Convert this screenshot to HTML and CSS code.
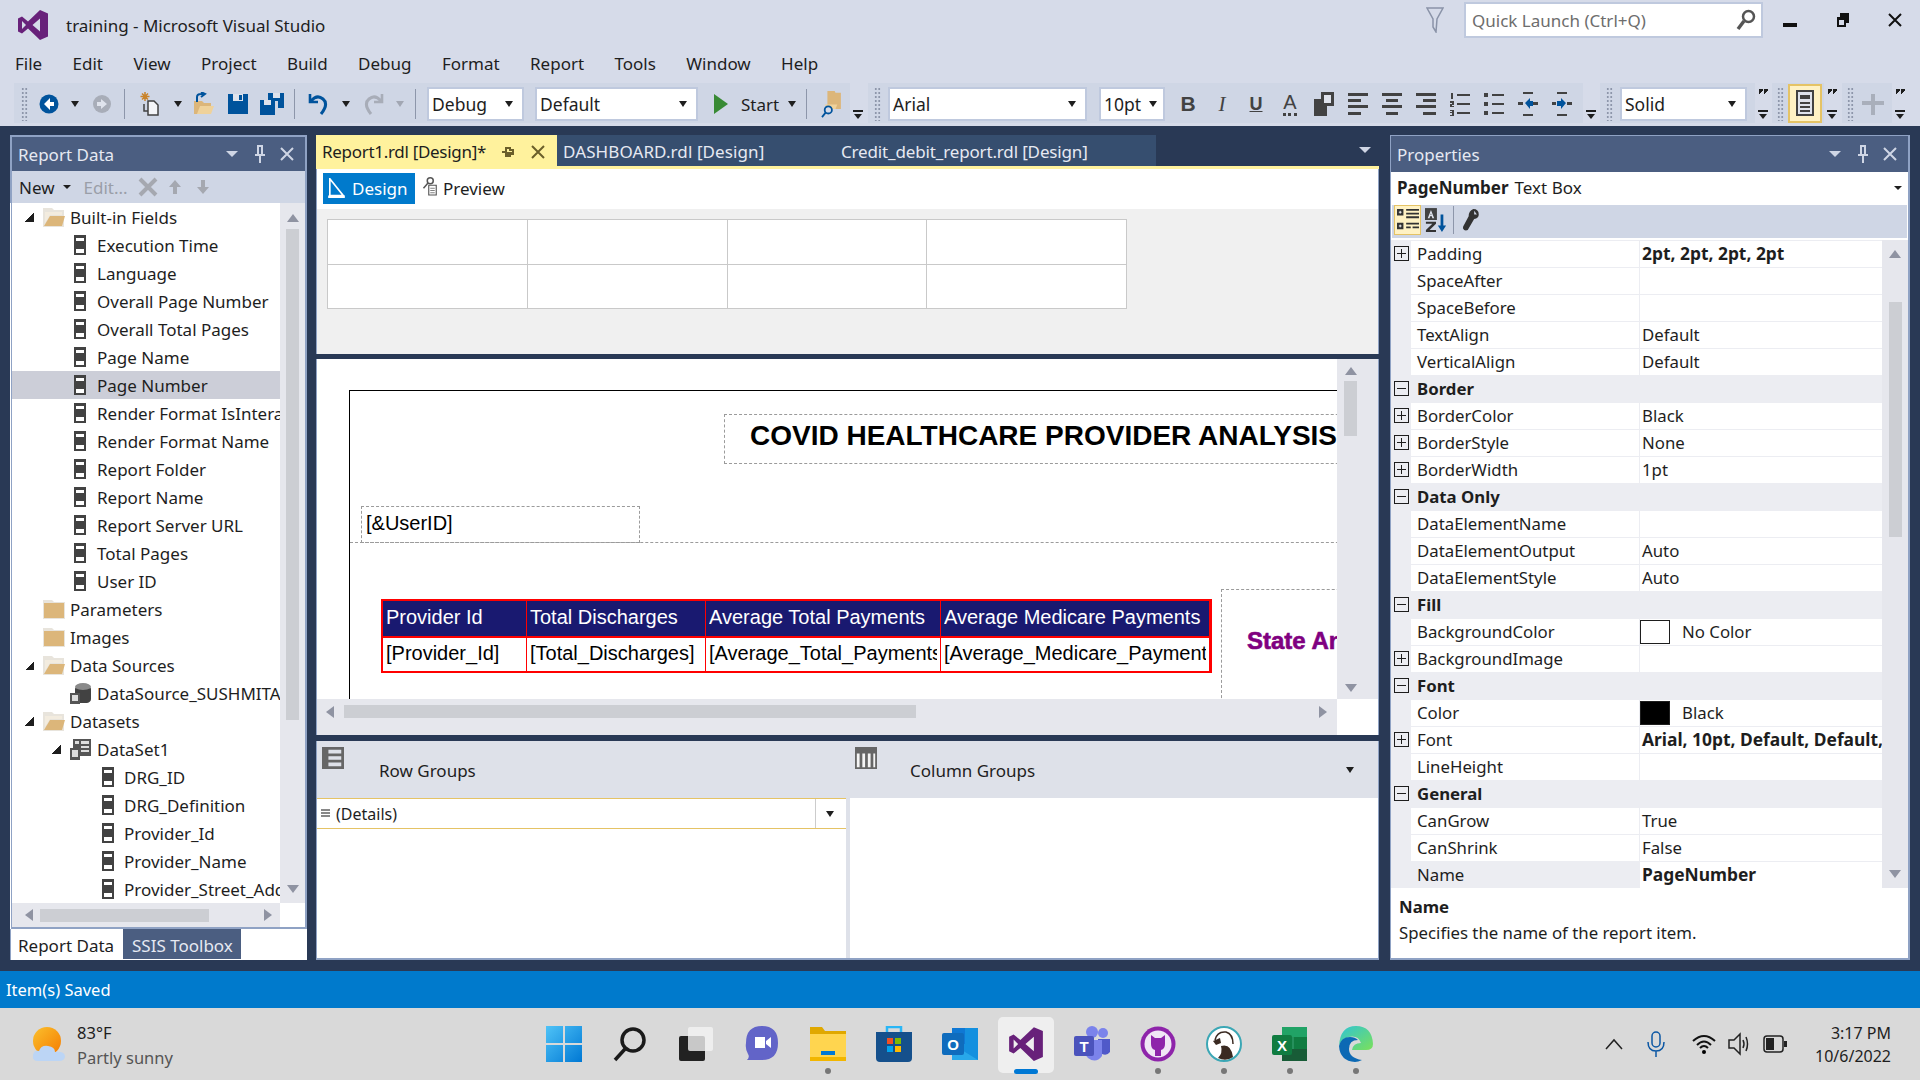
FILE: index.html
```html
<!DOCTYPE html>
<html>
<head>
    <title>training - Microsoft Visual Studio</title>
    <link rel="stylesheet" href="styles.css">
</head>
<body>
    <svg class="defs" width="0" height="0">
        <symbol id="vs" viewBox="0 0 32 32"><path fill-rule="evenodd" d="M23 1 31 4.500V27.500L23 31 11 19.500 5 24.500 1 22.500V9.500L5 7.500 11 12.500ZM23 9.500 15.500 16 23 22.500ZM5 12V20L9 16Z"/></symbol>
        <symbol id="field" viewBox="0 0 12 20"><rect width="12" height="20" fill="#424242"/><rect x="2" y="3" width="8" height="3" fill="#fff"/><rect x="2" y="14" width="8" height="4" fill="#fff"/></symbol>
        <symbol id="folder" viewBox="0 0 22 20"><path d="M0 1H9L11 3H22V20H0Z" fill="#e8e4dc"/><path d="M1 4H21V19H1Z" fill="#dcb67a"/></symbol>
        <symbol id="folder-open" viewBox="0 0 22 20"><path d="M0 1H9L11 3H21V20H0Z" fill="#e8e4dc"/><path d="M2 5H19V8H7L2 16Z" fill="#f3ecdf"/><path d="M7 9H22L19 19H1Z" fill="#dcb67a"/></symbol>
        <symbol id="db" viewBox="0 0 21 21"><ellipse cx="13" cy="4" rx="8" ry="4" fill="#8a8a8a"/><path d="M5 5V20H17Q21 19 21 16V5Q13 9 5 5Z" fill="#424242"/><rect x="0" y="10" width="10" height="11" fill="#555"/><rect x="2" y="12" width="6" height="6" fill="#ddd"/></symbol>
        <symbol id="dataset" viewBox="0 0 21 21"><rect x="3" y="0" width="18" height="17" fill="#555"/><path d="M5 2H9V5H5ZM11 2H19V5H11ZM11 7H19V9H11ZM11 11H19V13H11Z" fill="#ddd"/><rect x="0" y="9" width="10" height="12" fill="#555"/><rect x="2" y="11" width="6" height="7" fill="#ddd"/></symbol>
        <symbol id="back" viewBox="0 0 20 20"><circle cx="10" cy="10" r="9.500"/><path d="M11 4 5 10 11 16V12H15V8H11Z" fill="#fff"/></symbol>
        <symbol id="forward" viewBox="0 0 20 20"><circle cx="10" cy="10" r="9" fill="#a8adb8"/><path d="M9 5 15 10 9 15V12H5V8H9Z" fill="#dfe3ec"/></symbol>
        <symbol id="new" viewBox="0 0 20 24"><path d="M5 0V9M0.500 4.500H9.500M2 1.500 8 7.500M8 1.500 2 7.500" fill="none" stroke="#c9832a" stroke-width="1.500"/><path d="M8 9H14L18 13V23H8Z" fill="#f4f5f8" stroke="#424242" stroke-width="1.500"/><path d="M4 12V19H8" fill="none" stroke="#424242" stroke-width="1.500"/></symbol>
        <symbol id="open" viewBox="0 0 22 24"><path d="M1 9H9L11 11H18V22H1Z" fill="#dcb67a"/><path d="M4 22 7 14H21L18 22Z" fill="#efd29b"/><path d="M4 10V5Q4 2 8 2H11M8 0 12 2 8 5" fill="none" stroke="#00539c" stroke-width="2"/></symbol>
        <symbol id="save" viewBox="0 0 20 20"><path d="M0 0H20V20H0Z" fill="#00539c"/><path d="M5 0H15V7H5Z" fill="#dfe3ec"/><path d="M11 1H14V6H11Z" fill="#00539c"/></symbol>
        <symbol id="saveall" viewBox="0 0 24 22"><path d="M8 0H24V15H18V8H8Z" fill="#00539c"/><path d="M13 0H20V5H13Z" fill="#dfe3ec"/><path d="M0 7H15V22H0Z" fill="#00539c"/><path d="M4 7H11V12H4Z" fill="#dfe3ec"/></symbol>
        <symbol id="undo" viewBox="0 0 22 24"><path d="M3 3V11H11" fill="none" stroke="currentColor" stroke-width="2.600" transform="translate(0 -1)"/><path d="M4 9Q10 2 16 7T14 22" fill="none" stroke="currentColor" stroke-width="3"/></symbol>
        <symbol id="find" viewBox="0 0 22 30"><path d="M7 0H15L16 2H22V20H7Z" fill="#dcb67a"/><path d="M4 15H18L16 20H7Z" fill="#efd29b"/><circle cx="8" cy="21" r="4" fill="#d6dbe9" stroke="#00539c" stroke-width="2"/><path d="M5 24 1 29" stroke="#00539c" stroke-width="2"/></symbol>
        <symbol id="fillbox" viewBox="0 0 20 24"><rect y="7" width="13" height="17" fill="#424242"/><rect x="7" y="0" width="13" height="14" fill="#424242"/><rect x="10" y="3" width="7" height="8" fill="#dfe3ec"/></symbol>
        <symbol id="al-left" viewBox="0 0 20 24"><path d="M0 1H20V4H0ZM0 7H13V10H0ZM0 13H20V16H0ZM0 20H13V23H0Z"/></symbol>
        <symbol id="al-center" viewBox="0 0 20 24"><path d="M0 1H20V4H0ZM4 7H16V10H4ZM0 13H20V16H0ZM4 20H16V23H4Z"/></symbol>
        <symbol id="al-right" viewBox="0 0 20 24"><path d="M0 1H20V4H0ZM7 7H20V10H7ZM0 13H20V16H0ZM7 20H20V23H7Z"/></symbol>
        <symbol id="ol" viewBox="0 0 20 24"><path d="M7 2H20V4H7ZM7 11H20V13H7ZM7 20H20V22H7ZM1 1H3V7H1ZM0 9H4V13H2V14H4V15H0V12H2V11H0ZM0 18H4V24H0V23H2V21H0V20H2V19H0Z"/></symbol>
        <symbol id="ul" viewBox="0 0 20 24"><path d="M0 1H4V5H0ZM8 2H20V4H8ZM0 10H4V14H0ZM8 11H20V13H8ZM0 19H4V23H0ZM8 20H20V22H8Z"/></symbol>
        <symbol id="outdent" viewBox="0 0 20 24"><path d="M5 0H15V2H5ZM0 10H5V13H0ZM15 10H20V13H15ZM5 22H15V24H5Z" fill="#424242"/><path d="M7 11 12 6V9H15V14H12V17Z" fill="#00539c"/></symbol>
        <symbol id="indent" viewBox="0 0 20 24"><path d="M5 0H15V2H5ZM0 10H4V13H0ZM15 10H20V13H15ZM5 22H15V24H5Z" fill="#424242"/><path d="M14 11 9 6V9H5V14H9V17Z" fill="#00539c"/></symbol>
        <symbol id="page" viewBox="0 0 18 26"><rect x="1" y="1" width="16" height="24" fill="#dfe3ec" stroke="#424242" stroke-width="2"/><path d="M4 5H14V9H4ZM4 12H14V14H4ZM4 16H14V18H4ZM4 20H14V22H4Z" fill="#424242"/></symbol>
        <symbol id="cat" viewBox="0 0 24 26"><path d="M0 1H7V8H0ZM0 16H7V23H0Z" fill="#333"/><path d="M2 4.500H5M3.500 3V6M2 19.500H5M3.500 18V21" stroke="#fff"/><path d="M10 1H24V3H10ZM10 5H24V7H10ZM10 9H24V11H10ZM10 16H24V18H10ZM10 20H15V22H10ZM17 20H24V22H17Z" fill="#333"/></symbol>
        <symbol id="az" viewBox="0 0 24 26"><rect x="0" y="0" width="13" height="13" fill="#424242"/><path d="M6.500 2 10 11H8L7.500 9H5.500L5 11H3ZM6 7.500H7L6.500 5.500Z" fill="#dfe3ec" fill-rule="evenodd"/><path d="M1 15H12V17L5 24H12V26H1V24L8 17H1Z" fill="#333"/><path d="M17 7H20V19H23L18.500 26 14 19H17Z" fill="#00539c"/></symbol>
        <symbol id="wrench" viewBox="0 0 20 24"><path d="M13 0Q19 0 19 6 19 10 14 11L7 23Q5 24 3 23 1 21 2 19L8 8Q8 2 13 0ZM14 2V6L17 6" fill="#333"/></symbol>
        <symbol id="rows" viewBox="0 0 24 24"><path d="M0 0H24V24H0Z" fill="#666"/><path d="M7 3H21V7H7ZM7 10H21V14H7ZM7 17H21V21H7Z" fill="#dee1e9"/></symbol>
        <symbol id="cols" viewBox="0 0 24 24"><path d="M0 0H24V24H0Z" fill="#666"/><path d="M2 7H5V22H2ZM8 7H11V22H8ZM14 7H17V22H14ZM20 7H22V22H20Z" fill="#f5f5f5"/></symbol>
        <symbol id="design" viewBox="0 0 20 24"><path d="M2 1 18 21H2Z" fill="none" stroke="#fff" stroke-width="2"/><path d="M0 21H20V24H0Z" fill="#fff"/></symbol>
        <symbol id="preview" viewBox="0 0 20 24"><circle cx="11" cy="5" r="4" fill="none" stroke="#555" stroke-width="2"/><path d="M8 8 2 15" stroke="#555" stroke-width="2"/><path d="M9 11H19V24H9Z" fill="#fff" stroke="#555" stroke-width="1.500"/><path d="M11 15H17M11 18H17M11 21H17" stroke="#555"/></symbol>
        <symbol id="pin" viewBox="0 0 12 18"><path d="M3 0H9V9H11V11H7V18H5V11H1V9H3ZM5 2V9H7V2Z" fill-rule="evenodd"/></symbol>
        <symbol id="close" viewBox="0 0 14 14"><path d="M1 1 13 13M13 1 1 13" fill="none" stroke="currentColor" stroke-width="2"/></symbol>
    </svg>

    <header class="titlebar">
        <svg class="vs-logo"><use href="#vs"/></svg>
        <span class="app-title">training - Microsoft Visual Studio</span>
        <svg class="feedback" viewBox="0 0 18 26"><path d="M1 1H17L11 12 10 25 7 20V12Z" fill="none" stroke="#8a93a8" stroke-width="1.500"/></svg>
        <div class="quick-launch">
            <span>Quick Launch (Ctrl+Q)</span>
            <svg class="ql-search" viewBox="0 0 20 22"><circle cx="12.500" cy="7.500" r="5.500" fill="#fff" stroke="#555" stroke-width="2.500"/><path d="M8 12 2 20" stroke="#555" stroke-width="3.500"/></svg>
        </div>
        <div class="win-btn"><span class="win-min"></span></div>
        <div class="win-btn"><svg class="win-restore" viewBox="0 0 14 16"><path d="M4 1H13V11H10V5H4ZM1 5H10V15H1ZM3 8V13H8V8Z" fill="#111" fill-rule="evenodd"/></svg></div>
        <div class="win-btn"><svg class="win-close"><use href="#close"/></svg></div>
    </header>

    <nav class="menubar">
        <span>File</span><span>Edit</span><span>View</span><span>Project</span><span>Build</span><span>Debug</span><span>Format</span><span>Report</span><span>Tools</span><span>Window</span><span>Help</span>
    </nav>

    <div class="toolbars">
        <div class="tb seg-std">
            <div class="slot w20"><i class="grip"></i></div>
            <div class="slot w30"><svg class="ic-20 blue"><use href="#back"/></svg></div>
            <div class="slot w22"><i class="arr"></i></div>
            <div class="slot w32"><svg class="ic-20"><use href="#forward"/></svg></div>
            <div class="slot w12"><i class="sep"></i></div>
            <div class="slot w40"><svg class="ic-24"><use href="#new"/></svg></div>
            <div class="slot w16"><i class="arr"></i></div>
            <div class="slot w36"><svg class="ic-24"><use href="#open"/></svg></div>
            <div class="slot w32"><svg class="ic-20"><use href="#save"/></svg></div>
            <div class="slot w36"><svg class="ic-24"><use href="#saveall"/></svg></div>
            <div class="slot w8"><i class="sep"></i></div>
            <div class="slot w40"><svg class="ic-24 undo"><use href="#undo"/></svg></div>
            <div class="slot w16"><i class="arr"></i></div>
            <div class="slot w40"><svg class="ic-24 redo"><use href="#undo"/></svg></div>
            <div class="slot w12"><i class="arr off"></i></div>
            <div class="slot w18"><i class="sep"></i></div>
            <div class="combo combo-debug"><span>Debug</span><i class="arr"></i></div>
            <div class="combo combo-default"><span>Default</span><i class="arr"></i></div>
            <div class="tb-start"><i class="play"></i><span>Start</span><i class="arr"></i></div>
            <div class="slot w12"><i class="sep"></i></div>
            <div class="slot w38"><svg class="ic-30"><use href="#find"/></svg></div>
        </div>
        <div class="overflow"><i class="over-mark"></i></div>
        <div class="tb seg-fmt">
            <div class="slot w18"><i class="grip"></i></div>
            <div class="combo combo-font"><span>Arial</span><i class="arr"></i></div>
            <div class="combo combo-size"><span>10pt</span><i class="arr"></i></div>
            <div class="slot fmt fmt-first"><b class="fmt-b">B</b></div>
            <div class="slot fmt"><i class="fmt-i">I</i></div>
            <div class="slot fmt"><u class="fmt-u">U</u></div>
            <div class="slot fmt"><span class="fmt-a">A</span></div>
            <div class="slot fmt"><svg class="ic-fmt"><use href="#fillbox"/></svg></div>
            <div class="slot fmt"><svg class="ic-fmt"><use href="#al-left"/></svg></div>
            <div class="slot fmt"><svg class="ic-fmt"><use href="#al-center"/></svg></div>
            <div class="slot fmt"><svg class="ic-fmt"><use href="#al-right"/></svg></div>
            <div class="slot fmt"><svg class="ic-fmt"><use href="#ol"/></svg></div>
            <div class="slot fmt"><svg class="ic-fmt"><use href="#ul"/></svg></div>
            <div class="slot fmt"><svg class="ic-fmt"><use href="#outdent"/></svg></div>
            <div class="slot fmt"><svg class="ic-fmt"><use href="#indent"/></svg></div>
        </div>
        <div class="overflow"><i class="over-mark"></i></div>
        <div class="tb seg-solid">
            <div class="slot w18"><i class="grip"></i></div>
            <div class="combo combo-solid"><span>Solid</span><i class="arr"></i></div>
        </div>
        <div class="overflow tall"><i class="over-top"></i><i class="over-mark"></i></div>
        <div class="tb seg-page">
            <div class="slot w16"><i class="grip"></i></div>
            <div class="page-btn"><svg class="ic-page"><use href="#page"/></svg></div>
        </div>
        <div class="overflow tall"><i class="over-top"></i><i class="over-mark"></i></div>
        <div class="tb seg-plus">
            <div class="slot w16"><i class="grip"></i></div>
            <div class="slot w30"><svg class="ic-24" viewBox="0 0 24 24"><path d="M10 2H14V9H23V13H14V23H10V13H1V9H10Z" fill="#a9afbb"/></svg></div>
        </div>
        <div class="overflow tall"><i class="over-top"></i><i class="over-mark"></i></div>
    </div>

    <main class="dock">
        <section class="panel panel-left">
            <div class="panel-title">
                <span>Report Data</span>
                <i class="arr light"></i>
                <svg class="pin"><use href="#pin"/></svg>
                <svg class="panel-close"><use href="#close"/></svg>
            </div>
            <div class="rd-toolbar">
                <span>New</span><i class="arr"></i>
                <span class="muted">Edit...</span>
                <svg class="rd-x" viewBox="0 0 20 20"><path d="M2 2 18 18M18 2 2 18" stroke="#a5a8b0" stroke-width="4"/></svg>
                <svg class="rd-arrow" viewBox="0 0 14 16"><path d="M7 1 13 8H9V15H5V8H1Z" fill="#a5a8b0"/></svg>
                <svg class="rd-arrow" viewBox="0 0 14 16"><path d="M5 1H9V8H13L7 15 1 8H5Z" fill="#a5a8b0"/></svg>
            </div>
            <div class="tree-wrap">
                <div class="tree">
                    <div class="row root"><i class="exp"></i><svg class="ic-folder"><use href="#folder-open"/></svg><span>Built-in Fields</span></div>
                    <div class="row field1"><svg class="ic-field"><use href="#field"/></svg><span>Execution Time</span></div>
                    <div class="row field1"><svg class="ic-field"><use href="#field"/></svg><span>Language</span></div>
                    <div class="row field1"><svg class="ic-field"><use href="#field"/></svg><span>Overall Page Number</span></div>
                    <div class="row field1"><svg class="ic-field"><use href="#field"/></svg><span>Overall Total Pages</span></div>
                    <div class="row field1"><svg class="ic-field"><use href="#field"/></svg><span>Page Name</span></div>
                    <div class="row field1 selected"><svg class="ic-field"><use href="#field"/></svg><span>Page Number</span></div>
                    <div class="row field1"><svg class="ic-field"><use href="#field"/></svg><span>Render Format IsInteractive</span></div>
                    <div class="row field1"><svg class="ic-field"><use href="#field"/></svg><span>Render Format Name</span></div>
                    <div class="row field1"><svg class="ic-field"><use href="#field"/></svg><span>Report Folder</span></div>
                    <div class="row field1"><svg class="ic-field"><use href="#field"/></svg><span>Report Name</span></div>
                    <div class="row field1"><svg class="ic-field"><use href="#field"/></svg><span>Report Server URL</span></div>
                    <div class="row field1"><svg class="ic-field"><use href="#field"/></svg><span>Total Pages</span></div>
                    <div class="row field1"><svg class="ic-field"><use href="#field"/></svg><span>User ID</span></div>
                    <div class="row root noexp"><svg class="ic-folder"><use href="#folder"/></svg><span>Parameters</span></div>
                    <div class="row root noexp"><svg class="ic-folder"><use href="#folder"/></svg><span>Images</span></div>
                    <div class="row root"><i class="exp"></i><svg class="ic-folder"><use href="#folder-open"/></svg><span>Data Sources</span></div>
                    <div class="row source"><svg class="ic-db"><use href="#db"/></svg><span>DataSource_SUSHMITA</span></div>
                    <div class="row root"><i class="exp"></i><svg class="ic-folder"><use href="#folder-open"/></svg><span>Datasets</span></div>
                    <div class="row dataset"><i class="exp"></i><svg class="ic-db"><use href="#dataset"/></svg><span>DataSet1</span></div>
                    <div class="row field2"><svg class="ic-field"><use href="#field"/></svg><span>DRG_ID</span></div>
                    <div class="row field2"><svg class="ic-field"><use href="#field"/></svg><span>DRG_Definition</span></div>
                    <div class="row field2"><svg class="ic-field"><use href="#field"/></svg><span>Provider_Id</span></div>
                    <div class="row field2"><svg class="ic-field"><use href="#field"/></svg><span>Provider_Name</span></div>
                    <div class="row field2"><svg class="ic-field"><use href="#field"/></svg><span>Provider_Street_Address</span></div>
                </div>
                <div class="vscroll vs-tree"><i class="sa up"></i><i class="thumb"></i><i class="sa down"></i></div>
                <div class="hscroll hs-tree"><i class="sa left"></i><i class="thumb"></i><i class="sa right"></i></div>
            </div>
            <div class="panel-tabs">
                <span class="ptab on">Report Data</span>
                <span class="ptab">SSIS Toolbox</span>
            </div>
        </section>

        <section class="center">
            <div class="doc-tabs">
                <div class="doc-tab active">
                    <span>Report1.rdl [Design]*</span>
                    <svg class="tab-pin" viewBox="0 0 14 12"><path d="M0 5H3V1H9V3H12V9H9V11H3V7H0ZM5 3V6H10V5H7V3Z" fill="#6b5f2a" fill-rule="evenodd"/></svg>
                    <svg class="tab-close"><use href="#close"/></svg>
                </div>
                <div class="doc-tab one"><span>DASHBOARD.rdl [Design]</span></div>
                <div class="doc-tab two"><span>Credit_debit_report.rdl [Design]</span></div>
                <i class="arr light well-arrow"></i>
            </div>
            <div class="doc-rule"></div>
            <div class="design-bar">
                <div class="view-btn on"><svg class="ic-view"><use href="#design"/></svg><span>Design</span></div>
                <div class="view-btn"><svg class="ic-view small"><use href="#preview"/></svg><span>Preview</span></div>
            </div>
            <div class="data-area">
                <div class="data-grid"><i></i><i></i><i></i><i></i><i></i><i></i><i></i><i></i></div>
            </div>
            <div class="splitter"></div>
            <div class="surface">
                <div class="canvas">
                    <div class="report">
                        <div class="item title-box"><span>COVID HEALTHCARE PROVIDER ANALYSIS</span></div>
                        <div class="item user-box">[&amp;UserID]</div>
                        <div class="head-line"></div>
                        <div class="tablix">
                            <div class="th"><span>Provider Id</span></div>
                            <div class="th"><span>Total Discharges</span></div>
                            <div class="th"><span>Average Total Payments</span></div>
                            <div class="th"><span>Average Medicare Payments</span></div>
                            <div class="td"><span>[Provider_Id]</span></div>
                            <div class="td"><span>[Total_Discharges]</span></div>
                            <div class="td"><span>[Average_Total_Payments]</span></div>
                            <div class="td"><span>[Average_Medicare_Payments]</span></div>
                        </div>
                        <div class="item chart-box"><span>State Analysis</span></div>
                    </div>
                </div>
                <div class="vscroll vs-canvas"><i class="sa up"></i><i class="thumb"></i><i class="sa down"></i></div>
                <div class="hscroll hs-canvas"><i class="sa left"></i><i class="thumb"></i><i class="sa right"></i></div>
            </div>
            <div class="splitter thin"></div>
            <div class="groups-head">
                <div class="group-title row-title"><svg class="ic-group"><use href="#rows"/></svg><span>Row Groups</span></div>
                <div class="group-title col-title"><svg class="ic-group"><use href="#cols"/></svg><span>Column Groups</span><i class="arr"></i></div>
            </div>
            <div class="groups-body">
                <div class="group-pane">
                    <div class="details">
                        <span class="det-ic"></span><span>(Details)</span>
                        <div class="det-drop"><i class="arr"></i></div>
                    </div>
                </div>
                <div class="group-pane second"></div>
            </div>
        </section>

        <section class="panel panel-right">
            <div class="panel-title">
                <span>Properties</span>
                <i class="arr light"></i>
                <svg class="pin"><use href="#pin"/></svg>
                <svg class="panel-close"><use href="#close"/></svg>
            </div>
            <div class="prop-select"><b>PageNumber</b> <span>Text Box</span><i class="arr"></i></div>
            <div class="prop-tools">
                <div class="pt-btn on"><svg class="ic-pt"><use href="#cat"/></svg></div>
                <div class="pt-btn"><svg class="ic-pt"><use href="#az"/></svg></div>
                <i class="pt-sep"></i>
                <div class="pt-btn"><svg class="ic-wrench"><use href="#wrench"/></svg></div>
            </div>
            <div class="prop-wrap">
                <div class="prop-grid">
                    <div class="prop"><i class="box plus"></i><span class="k">Padding</span><span class="v strong">2pt, 2pt, 2pt, 2pt</span></div>
                    <div class="prop"><span class="k">SpaceAfter</span><span class="v"></span></div>
                    <div class="prop"><span class="k">SpaceBefore</span><span class="v"></span></div>
                    <div class="prop"><span class="k">TextAlign</span><span class="v">Default</span></div>
                    <div class="prop"><span class="k">VerticalAlign</span><span class="v">Default</span></div>
                    <div class="prop cat"><i class="box"></i><span>Border</span></div>
                    <div class="prop"><i class="box plus"></i><span class="k">BorderColor</span><span class="v">Black</span></div>
                    <div class="prop"><i class="box plus"></i><span class="k">BorderStyle</span><span class="v">None</span></div>
                    <div class="prop"><i class="box plus"></i><span class="k">BorderWidth</span><span class="v">1pt</span></div>
                    <div class="prop cat"><i class="box"></i><span>Data Only</span></div>
                    <div class="prop"><span class="k">DataElementName</span><span class="v"></span></div>
                    <div class="prop"><span class="k">DataElementOutput</span><span class="v">Auto</span></div>
                    <div class="prop"><span class="k">DataElementStyle</span><span class="v">Auto</span></div>
                    <div class="prop cat"><i class="box"></i><span>Fill</span></div>
                    <div class="prop"><span class="k">BackgroundColor</span><span class="v"><i class="swatch"></i>No Color</span></div>
                    <div class="prop"><i class="box plus"></i><span class="k">BackgroundImage</span><span class="v"></span></div>
                    <div class="prop cat"><i class="box"></i><span>Font</span></div>
                    <div class="prop"><span class="k">Color</span><span class="v"><i class="swatch black"></i>Black</span></div>
                    <div class="prop"><i class="box plus"></i><span class="k">Font</span><span class="v strong">Arial, 10pt, Default, Default, Normal</span></div>
                    <div class="prop"><span class="k">LineHeight</span><span class="v"></span></div>
                    <div class="prop cat"><i class="box"></i><span>General</span></div>
                    <div class="prop"><span class="k">CanGrow</span><span class="v">True</span></div>
                    <div class="prop"><span class="k">CanShrink</span><span class="v">False</span></div>
                    <div class="prop current"><span class="k">Name</span><span class="v strong">PageNumber</span></div>
                </div>
                <div class="vscroll vs-prop"><i class="sa up"></i><i class="thumb"></i><i class="sa down"></i></div>
            </div>
            <div class="prop-desc">
                <b>Name</b>
                <span>Specifies the name of the report item.</span>
            </div>
        </section>
    </main>

    <div class="statusbar">Item(s) Saved</div>

    <footer class="taskbar">
        <div class="weather">
            <svg class="wx" viewBox="0 0 34 36">
                <defs><linearGradient id="sun" x1="0" y1="0" x2="1" y2="1"><stop offset="0" stop-color="#fbc02d"/><stop offset="1" stop-color="#f57c00"/></linearGradient></defs>
                <circle cx="15" cy="15" r="14" fill="url(#sun)"/>
                <path d="M6 35Q0 35 1 29 2 24 7 25 9 19 16 20 23 21 23 26 32 25 33 30 33 35 27 35Z" fill="#bcd5f5"/>
            </svg>
            <div class="wx-text"><span>83°F</span><span class="dim">Partly sunny</span></div>
        </div>
        <div class="apps">
            <div class="app"><svg class="app-ic" viewBox="0 0 36 36"><defs><linearGradient id="win" x1="0" y1="0" x2="1" y2="1"><stop offset="0" stop-color="#4fc3f7"/><stop offset="1" stop-color="#0078d4"/></linearGradient></defs><path d="M0 0H17V17H0ZM19 0H36V17H19ZM0 19H17V36H0ZM19 19H36V36H19Z" fill="url(#win)"/></svg></div>
            <div class="app"><svg class="app-ic" viewBox="0 0 36 36"><circle cx="21" cy="14" r="11" fill="none" stroke="#1a1a1a" stroke-width="3.500"/><path d="M13 23 3 34" stroke="#1a1a1a" stroke-width="3.500"/></svg></div>
            <div class="app"><svg class="app-ic" viewBox="0 0 36 36"><rect x="1" y="10" width="26" height="25" rx="2" fill="#222"/><rect x="10" y="1" width="25" height="24" rx="2" fill="#f2f2f2" fill-opacity=".8"/></svg></div>
            <div class="app"><svg class="app-ic" viewBox="0 0 36 36"><path d="M18 0Q34 0 34 17 34 34 18 34H3Q6 31 4 28 1 23 2 17 2 0 18 0Z" fill="#6264c8"/><path d="M11 11H21V22H11ZM22 15 27 11V22L22 18Z" fill="#fff"/></svg></div>
            <div class="app dot"><svg class="app-ic" viewBox="0 0 36 36"><path d="M0 1H12L15 5H36V35H0Z" fill="#e0a800"/><path d="M0 8H36V35H0Z" fill="#ffd54f"/><path d="M11 25H25V29H11Z" fill="#0078d4"/><path d="M0 31H36V35H0Z" fill="#f2b600"/></svg></div>
            <div class="app"><svg class="app-ic" viewBox="0 0 36 36"><path d="M11 7V1H25V7" fill="none" stroke="#29b6f6" stroke-width="2.500"/><path d="M0 6H36V32Q36 36 32 36H4Q0 36 0 32Z" fill="#15508c"/><path d="M11 12H17V18H11Z" fill="#f25022"/><path d="M19 12H25V18H19Z" fill="#7fba00"/><path d="M11 20H17V26H11Z" fill="#00a4ef"/><path d="M19 20H25V26H19Z" fill="#ffb900"/></svg></div>
            <div class="app"><svg class="app-ic" viewBox="0 0 36 36"><path d="M10 2H36V34H10Z" fill="#1490df"/><path d="M10 18 36 34H10Z" fill="#28a8ea"/><path d="M10 2H23V18H10Z" fill="#0f78d4"/><rect x="0" y="7" width="22" height="22" rx="2" fill="#0f6cbd"/><text x="11" y="24" class="app-letter">O</text></svg></div>
            <div class="app running"><svg class="app-ic vs-app"><use href="#vs"/></svg></div>
            <div class="app"><svg class="app-ic" viewBox="0 0 36 36"><circle cx="29" cy="7" r="5" fill="#7b83eb"/><circle cx="18" cy="6" r="6" fill="#7b83eb"/><path d="M24 13H36V26Q33 30 28 28L24 24Z" fill="#5059c9"/><path d="M10 14H28V30Q22 38 14 32 10 28 10 22Z" fill="#7b83eb"/><rect x="0" y="10" width="20" height="20" rx="2" fill="#4b53bc"/><text x="10" y="26" class="app-letter">T</text></svg></div>
            <div class="app dot"><svg class="app-ic" viewBox="0 0 36 36"><circle cx="18" cy="18" r="17.500" fill="#8e24aa"/><circle cx="18" cy="18" r="13.500" fill="#f0e6f5"/><path d="M11 9 15 12H21L25 9V18Q25 23 21 24V30H15V24Q11 23 11 18Z" fill="#8e24aa"/></svg></div>
            <div class="app dot"><svg class="app-ic" viewBox="0 0 36 36"><circle cx="18" cy="18" r="17" fill="#fff" stroke="#3ba7b5" stroke-width="2"/><path d="M9 14Q11 5 20 6 27 8 27 18" fill="none" stroke="#3a2a22" stroke-width="1.500"/><path d="M7 15 14 12 15 17 10 19Z" fill="#3a2a22"/><path d="M15 20Q25 17 27 31 20 36 12 32 17 27 15 20Z" fill="#3a2a22"/></svg></div>
            <div class="app dot"><svg class="app-ic" viewBox="0 0 36 36"><path d="M10 1H35V35H10Z" fill="#185c37"/><path d="M10 1H35V11H10Z" fill="#21a366"/><path d="M22 11H35V23H22Z" fill="#107c41"/><path d="M10 11H22V23H10Z" fill="#33c481" fill-opacity=".5"/><rect x="0" y="9" width="20" height="20" rx="2" fill="#107c41"/><text x="10" y="25" class="app-letter">X</text></svg></div>
            <div class="app dot"><svg class="app-ic" viewBox="0 0 36 36"><defs><linearGradient id="edge" x1="0" y1="0" x2="1" y2="1"><stop offset="0" stop-color="#2fc4d4"/><stop offset="1" stop-color="#7be05a"/></linearGradient></defs><path d="M18 0Q34 0 35 18 35 24 28 24H14Q15 17 23 17 20 9 11 11 3 13 1 20 2 0 18 0Z" fill="url(#edge)"/><path d="M1 20Q3 11 12 11 17 11 20 14 11 14 11 23 11 32 24 34 20 36 17 36 2 35 1 20Z" fill="#0c69b4"/></svg></div>
        </div>
        <div class="tray">
            <svg class="tray-chev" viewBox="0 0 18 12"><path d="M1 11 9 2 17 11" fill="none" stroke="#222" stroke-width="1.500"/></svg>
            <svg class="tray-mic" viewBox="0 0 18 26"><rect x="5" y="1" width="8" height="15" rx="4" fill="none" stroke="#0b57a4" stroke-width="1.500"/><path d="M1 11Q1 20 9 20 17 20 17 11M9 20V26" fill="none" stroke="#0b57a4" stroke-width="1.500"/></svg>
            <svg class="tray-wifi" viewBox="0 0 24 20"><path d="M1 7Q12 -3 23 7M5 11Q12 4 19 11M8 14Q12 10 16 14" fill="none" stroke="#111" stroke-width="2"/><circle cx="12" cy="18" r="2"/></svg>
            <svg class="tray-vol" viewBox="0 0 24 24"><path d="M1 8H6L12 2V22L6 16H1Z" fill="none" stroke="#222" stroke-width="1.500"/><path d="M15 8Q17 12 15 16M18 5Q21 12 18 19" fill="none" stroke="#222" stroke-width="1.500"/></svg>
            <svg class="tray-bat" viewBox="0 0 24 20"><rect x="1" y="2" width="19" height="16" rx="3" fill="none" stroke="#222" stroke-width="1.500"/><rect x="3" y="4" width="8" height="12" fill="#222"/><rect x="21" y="7" width="3" height="6" fill="#222"/></svg>
            <div class="clock"><span>3:17 PM</span><span>10/6/2022</span></div>
        </div>
    </footer>
</body>
</html>
```

FILE: styles.css
```css
* { box-sizing: border-box; }
html, body { margin: 0; padding: 0; }
body {
    width: 1920px;
    height: 1080px;
    overflow: hidden;
    display: flex;
    flex-direction: column;
    background: #d6dbe9;
    color: #1e1e1e;
    font-family: "Noto Sans", sans-serif;
    font-size: 17px;
}
i { display: block; font-style: normal; }
svg { display: block; flex: none; }
.defs { position: absolute; }

/* title bar */
.titlebar { height: 49px; display: flex; align-items: center; flex: none; }
.vs-logo { width: 32px; height: 32px; margin: 0 17px 0 17px; fill: #68217a; }
.app-title { font-size: 17px; margin-top: 2px; }
.feedback { width: 18px; height: 26px; margin: -10px 20px 0 auto; }
.quick-launch {
    width: 299px; height: 36px; margin-top: -9px;
    display: flex; align-items: center; justify-content: space-between;
    padding: 0 5px 0 6px;
    background: #fff; border: 2px solid #bfc9de;
    color: #6d6d6d;
}
.ql-search { width: 20px; height: 22px; }
.win-btn { width: 52.330px; margin-top: -9px; padding-left: 2px; display: flex; justify-content: center; align-items: center; height: 30px; }
.win-min { display: block; width: 14px; height: 4px; background: #111; margin-top: 10px; }
.win-restore { width: 14px; height: 16px; }
.win-close { width: 14px; height: 14px; color: #111; }

/* menu */
.menubar { height: 28px; flex: none; display: flex; align-items: center; gap: 30.400px; padding-left: 15px; font-size: 17px; margin-bottom: 2px; }

/* toolbars */
.toolbars { height: 47px; flex: none; display: flex; padding: 4px 0 3px 14px; }
.tb { display: flex; align-items: center; background: #cfd6e5; height: 40px; padding-top: 2px; }
.seg-std { width: 836px; }
.seg-fmt { width: 715px; margin-left: 2px; }
.seg-solid { width: 155px; margin-left: 1px; }
.seg-page { width: 52px; margin-left: 1px; }
.seg-plus { width: 50px; margin-left: 2px; }
.overflow { width: 16px; flex: none; display: flex; flex-direction: column; justify-content: flex-end; align-items: center; padding-bottom: 3px; }
.overflow.tall { justify-content: space-between; padding-top: 6px; }
.over-mark { width: 10px; height: 10px; border-top: 2px solid #1e1e1e; position: relative; }
.over-mark::after { content: ""; display: block; margin: 2px auto 0; border: 4px solid transparent; border-top: 5px solid #1e1e1e; border-bottom: 0; width: 0; }
.over-top { width: 9px; height: 7px; background: linear-gradient(135deg, #1e1e1e 50%, transparent 50%) 0 0 / 4px 7px no-repeat, linear-gradient(135deg, #1e1e1e 50%, transparent 50%) 5px 0 / 4px 7px no-repeat; }
.slot { height: 100%; display: flex; align-items: center; justify-content: center; flex: none; }
.w8 { width: 8px; } .w12 { width: 12px; } .w16 { width: 16px; } .w18 { width: 18px; } .w20 { width: 20px; }
.w22 { width: 22px; } .w30 { width: 30px; } .w32 { width: 32px; } .w36 { width: 36px; } .w38 { width: 38px; } .w40 { width: 40px; }
.grip { width: 7px; height: 34px; background: radial-gradient(circle, #8d96aa 1px, transparent 1.200px) 0 0 / 3.500px 4px; }
.sep { width: 1px; height: 30px; background: #8d96aa; }
.arr { width: 0; height: 0; border: 4.500px solid transparent; border-top: 6px solid #1e1e1e; border-bottom: 0; flex: none; }
.arr.off { border-top-color: #a2a7b3; }
.arr.light { border-top-color: #cfd6e5; border-width: 6px 6px 0; }
.ic-20 { width: 20px; height: 20px; }
.ic-24 { width: 24px; height: 24px; }
.ic-30 { width: 20px; height: 27px; }
.blue { fill: #00539c; }
.undo { color: #00539c; }
.redo { color: #a8adb8; transform: scaleX(-1); }
.combo {
    height: 34px; flex: none;
    display: flex; align-items: center; justify-content: space-between;
    padding: 0 9px 0 3px;
    background: #fff; border: 2px solid #bfc9de;
    font-size: 17.500px;
}
.combo-debug { width: 97px; margin-left: 3px; }
.combo-default { width: 163px; margin-left: 11px; }
.combo-font { width: 199px; margin-left: 2px; }
.combo-size { width: 66px; margin-left: 12px; padding-right: 6px; }
.combo-solid { width: 127px; margin-left: 2px; }
.tb-start { width: 102px; display: flex; align-items: center; padding-left: 16px; flex: none; }
.play { width: 0; height: 0; border: 10px solid transparent; border-left: 14px solid #388a34; border-right: 0; margin-right: 13px; }
.tb-start .arr { margin-left: 9px; }
.fmt { width: 34px; color: #424242; fill: #424242; font-family: "Liberation Sans", sans-serif; font-size: 21px; }
.fmt-first { margin-left: 6px; }
.fmt-i { font-family: "Liberation Serif", serif; font-style: italic; }
.fmt-u { font-size: 18px; font-weight: bold; }
.fmt-a { font-size: 20px; border-bottom: 3px dotted #424242; line-height: 21px; }
.ic-fmt { width: 20px; height: 24px; }
.page-btn { width: 34px; height: 39px; background: #fff2c4; border: 2px solid #e5c365; display: flex; align-items: center; justify-content: center; margin-top: -2px; }
.ic-page { width: 18px; height: 26px; }

/* dock */
.dock {
    height: 845px; flex: none;
    display: flex;
    padding: 9px 10px 11px 10px;
    background: #293955;
}
.panel { background: #fff; border: 2px solid #8fa2c4; border-top-width: 1px; display: flex; flex-direction: column; flex: none; }
.panel-left { width: 297px; border: 0; }
.panel-right { width: 520px; margin-left: 11px; border-width: 1px 2px 2px 1px; }
.panel-title {
    height: 36px; flex: none;
    display: flex; align-items: center;
    padding: 0 11px 0 6px;
    background: #4b5e81; color: #e6e9f2;
    border: 2px solid #8fa2c4; border-bottom: 0;
}
.panel-right .panel-title { border: 0; }
.panel-title .arr { margin-left: auto; }
.pin { width: 12px; height: 18px; margin: 0 14px 0 16px; fill: #cfd6e5; }
.panel-close { width: 14px; height: 14px; color: #cfd6e5; }

.rd-toolbar {
    height: 32px; flex: none;
    display: flex; align-items: center;
    padding-left: 7px;
    background: #cfd6e5; border: solid #8fa2c4; border-width: 0 2px;
}
.rd-toolbar .arr { margin: 0 13px 0 8px; border-width: 4px 4px 0; }
.muted { color: #9a9ea8; }
.rd-x { width: 20px; height: 20px; margin: 0 10px 0 10px; }
.rd-arrow { width: 14px; height: 16px; margin-right: 14px; }

.tree-wrap {
    flex: 1; min-height: 0;
    display: grid;
    grid-template-columns: 268px 1fr;
    grid-template-rows: 700px 1fr;
    border: solid #8fa2c4; border-width: 0 2px 2px 1px;
    margin-left: 1px;
}
.tree { overflow: hidden; }
.row { height: 28px; display: flex; align-items: center; white-space: nowrap; overflow: hidden; }
.selected { background: #ccced8; }
.root { padding-left: 13px; }
.root.noexp { padding-left: 31px; }
.field1 { padding-left: 62px; }
.field2 { padding-left: 90px; }
.source { padding-left: 58px; }
.dataset { padding-left: 40px; }
.exp { width: 18px; height: 9px; flex: none; background: linear-gradient(135deg, transparent 50%, #1e1e1e 50%) 0 0 / 9px 9px no-repeat; }
.ic-folder { width: 22px; height: 20px; margin-right: 5px; }
.ic-field { width: 12px; height: 20px; margin-right: 11px; }
.field2 .ic-field { margin-right: 10px; }
.ic-db { width: 21px; height: 21px; margin-right: 6px; }

.vscroll { background: #e6e7ed; display: flex; flex-direction: column; align-items: center; }
.hscroll { background: #e6e7ed; display: flex; align-items: center; }
.thumb { background: #ccced3; }
.sa { width: 0; height: 0; border: 6px solid transparent; flex: none; }
.sa.up { border-bottom: 8px solid #8f93a2; border-top: 0; }
.sa.down { border-top: 8px solid #8f93a2; border-bottom: 0; }
.sa.left { border-right: 8px solid #8f93a2; border-left: 0; }
.sa.right { border-left: 8px solid #8f93a2; border-right: 0; }

.vs-tree { padding: 11px 0 10px; }
.vs-tree .thumb { width: 13px; height: 491px; margin: 7px 0 auto; }
.hs-tree { padding-left: 13px; grid-column: 1; }
.hs-tree .thumb { width: 169px; height: 13px; margin: 0 auto 0 7px; }
.hs-tree .sa.right { margin-right: 8px; }

.panel-tabs { height: 31px; flex: none; display: flex; border-left: 1px solid #8fa2c4; }
.ptab { height: 30px; line-height: 33px; padding: 0 0 0 9px; background: #4b5e81; color: #e6e9f2; margin-left: 2px; width: 118px; white-space: nowrap; }
.ptab.on { background: #fff; color: #1e1e1e; width: 110px; margin-left: 0; padding-left: 7px; }

/* centre */
.center { width: 1063px; margin-left: 9px; display: flex; flex-direction: column; flex: none; background: #fff; border: solid #8fa2c4; border-width: 0 1px 2px 1px; }
.doc-tabs { height: 31px; flex: none; display: flex; background: #293955; margin: 0 -1px; }
.doc-tab { height: 31px; display: flex; align-items: center; color: #e6e9f2; background: #364e6f; padding-top: 2px; }
.doc-tab.active { width: 241px; background: #fff29d; color: #1e1e1e; padding-left: 6px; }
.doc-tab.active span { letter-spacing: -0.300px; }
.tab-pin { width: 14px; height: 12px; margin-left: 16px; }
.tab-close { width: 14px; height: 14px; margin-left: 15px; color: #6b5f2a; }
.doc-tab.one { width: 284px; padding-left: 6px; }
.doc-tab.one span { letter-spacing: 0.100px; }
.doc-tab.two { width: 315px; padding-left: 0; }
.doc-tab.two span { letter-spacing: -0.150px; }
.well-arrow { margin: 12px 8px 0 auto; }
.doc-rule { height: 3px; flex: none; background: #fff29d; margin: 0 -1px; }
.design-bar { height: 40px; flex: none; display: flex; align-items: center; padding: 0 0 2px 6px; gap: 2px; background: #fff; }
.view-btn { height: 31px; display: flex; align-items: center; padding: 0 8px 0 5px; gap: 6px; }
.view-btn.on { width: 92px; gap: 7px; background: #007acc; color: #fff; }
.ic-view { width: 17px; height: 20px; }
.ic-view.small { width: 15px; margin-top: -4px; }
.data-area { height: 145px; flex: none; background: #f0f0f0; padding: 10px 0 0 10px; }
.data-grid { width: 800px; height: 90px; display: grid; grid-template-columns: repeat(4, 1fr); grid-template-rows: 1fr 1fr; background: #fff; border: solid #c9c9c9; border-width: 1px 0 0 1px; }
.data-grid i { border: solid #c9c9c9; border-width: 0 1px 1px 0; }
.splitter { height: 5px; flex: none; background: #293955; margin: 0 -1px; }
.splitter.thin { height: 6px; }

.surface { height: 376px; flex: none; display: grid; grid-template-columns: 1fr 41px; grid-template-rows: 340px 1fr; }
.canvas { overflow: hidden; position: relative; font-family: "Liberation Sans", sans-serif; color: #000; font-size: 20px; }
.report { position: absolute; left: 32px; top: 31px; width: 1100px; height: 400px; border: solid #000; border-width: 1px 0 0 1px; }
.item { position: absolute; border: 1px dashed #9b9b9b; }
.title-box { left: 374px; top: 23px; width: 700px; height: 50px; padding-left: 25px; line-height: 41px; font-size: 28px; font-weight: bold; white-space: nowrap; }
.user-box { left: 11px; top: 115px; width: 279px; height: 37px; padding-left: 4px; line-height: 33px; }
.head-line { position: absolute; left: 0; top: 151px; width: 100%; border-top: 1px dashed #9b9b9b; }
.tablix {
    position: absolute; left: 31px; top: 208px;
    width: 831px; height: 74px;
    display: grid;
    grid-template-columns: 144px 179px 235px 1fr;
    grid-template-rows: 37px 1fr;
    border: 2px solid #f00;
}
.th, .td { border: solid #f00; border-width: 0 1px 1px 0; padding: 0 3px; overflow: hidden; white-space: nowrap; }
.th span, .td span { display: block; overflow: hidden; }
.th { background: #191970; color: #fff; border-bottom-width: 2px; line-height: 32px; }
.td { border-bottom: 0; background: #fff; line-height: 31px; }
.chart-box { left: 871px; top: 198px; width: 300px; height: 200px; padding: 37px 0 0 25px; font-size: 24px; font-weight: bold; color: #800080; -webkit-text-stroke: 0.600px #800080; white-space: nowrap; }

.vs-canvas { padding: 8px 0 7px 8px; align-items: flex-start; }
.vs-canvas .thumb { width: 13px; height: 55px; margin: 6px 0 auto -1px; }
.hs-canvas { padding: 6px 0 0 9px; align-items: flex-start; }
.hs-canvas .sa { margin-top: 1px; }
.hs-canvas .thumb { width: 572px; height: 13px; margin: 0 auto 0 10px; }
.hs-canvas .sa.right { margin-right: 10px; }

.groups-head { height: 57px; flex: none; display: grid; grid-template-columns: 533px 1fr; background: #dee1e9; }
.group-title { position: relative; display: flex; align-items: center; padding-top: 1px; }
.row-title { padding-left: 62px; }
.col-title { padding-left: 60px; }
.ic-group { position: absolute; top: 6px; left: 5px; width: 22px; height: 22px; }
.col-title .arr { margin-left: auto; margin-right: 24px; }
.groups-body { flex: 1; display: grid; grid-template-columns: 533px 1fr; }
.group-pane { border-right: 4px solid #dee1e9; }
.group-pane.second { border: 0; }
.details { height: 31px; display: flex; align-items: center; border: solid #e5c365; border-width: 1px 0 1px 0; padding-left: 4px; font-size: 16px; }
.det-ic { width: 9px; height: 9px; margin-right: 6px; background: repeating-linear-gradient(#888 0 2px, transparent 2px 3px); }
.det-drop { width: 31px; height: 100%; margin-left: auto; border-left: 1px solid #ccc; display: flex; align-items: center; justify-content: center; padding-right: 2px; }

/* properties */
.prop-select { height: 33px; flex: none; display: flex; align-items: center; padding: 0 6px 2px 6px; gap: 6px; }
.prop-select .arr { margin-left: auto; border-width: 4px 4px 0; }
.prop-tools { height: 33px; flex: none; display: flex; align-items: center; padding: 0 0 3px 2px; background: #cfd6e5; margin: 0 1px 2px 1px; }
.pt-btn { width: 27px; height: 30px; display: flex; align-items: center; justify-content: center; margin-right: 1px; }
.pt-btn.on { background: #fff2c4; border: 1px solid #e5c365; }
.ic-pt { width: 22px; height: 24px; }
.ic-wrench { width: 19px; height: 22px; }
.pt-sep { width: 1px; height: 28px; background: #8d96aa; margin: 0 3px; }
.prop-wrap { display: flex; height: 648px; flex: none; background: #ecedf2; }
.prop-grid { width: 491px; flex: none; }
.prop { height: 27px; display: flex; align-items: center; position: relative; padding-left: 20px; white-space: nowrap; font-size: 16.800px; }
.k { width: 228px; height: 26px; flex: none; padding-left: 6px; background: #fff; line-height: 25px; }
.v { flex: 1; height: 26px; margin-left: 1px; padding-left: 2px; background: #fff; overflow: hidden; line-height: 25px; display: flex; align-items: center; }
.strong { font-weight: bold; font-size: 17.400px; }
.current .k { background: transparent; }
.cat { font-weight: bold; padding-left: 26px; }
.box { position: absolute; left: 3px; top: 6px; width: 15px; height: 15px; border: 1px solid #1e1e1e; background: linear-gradient(#1e1e1e, #1e1e1e) center / 9px 1px no-repeat; }
.box.plus { background: linear-gradient(#1e1e1e, #1e1e1e) center / 9px 1px no-repeat, linear-gradient(#1e1e1e, #1e1e1e) center / 1px 9px no-repeat; }
.swatch { width: 30px; height: 24px; margin: 0 12px 0 -2px; border: 1px solid #1e1e1e; background: #fff; flex: none; }
.swatch.black { background: #000; }
.vs-prop { flex: 1; background: #e6e7ed; padding: 10px 0 10px; }
.vs-prop .thumb { width: 13px; height: 235px; margin: 44px 0 auto; }
.prop-desc { flex: 1; display: flex; flex-direction: column; padding: 7px 8px; gap: 3px; font-size: 16.800px; }

/* status + taskbar */
.statusbar { height: 37px; flex: none; background: #007acc; color: #fff; line-height: 37px; padding-left: 6px; font-size: 16.500px; }
.taskbar { height: 72px; flex: none; display: flex; background: #d9d9d9; }
.weather { width: 531px; flex: none; display: flex; align-items: center; padding-left: 32px; }
.wx { width: 34px; height: 36px; margin-right: 11px; }
.wx-text { display: flex; flex-direction: column; line-height: 25px; font-size: 16.500px; margin-top: 1px; }
.dim { color: #555; }
.apps { display: flex; }
.app { width: 66px; position: relative; display: flex; align-items: center; justify-content: center; }
.app-ic { width: 36px; height: 36px; }
.vs-app { fill: #68217a; }
.app.running::before { content: ""; position: absolute; left: 5px; right: 5px; top: 9px; bottom: 7px; background: #efefef; border-radius: 5px; }
.app.running .app-ic { position: relative; }
.app.running::after { content: ""; position: absolute; left: 21px; width: 24px; bottom: 6px; height: 5px; border-radius: 3px; background: #0078d4; }
.app.dot::after { content: ""; position: absolute; left: 30px; bottom: 6px; width: 6px; height: 6px; border-radius: 50%; background: #777; }
.app-letter { font-family: "Liberation Sans", sans-serif; font-size: 15px; font-weight: bold; fill: #fff; text-anchor: middle; }
.tray { flex: 1; display: flex; align-items: center; }
.tray-chev { width: 18px; height: 12px; margin-left: 216px; }
.tray-mic { width: 18px; height: 26px; margin-left: 24px; }
.tray-wifi { width: 24px; height: 20px; margin-left: 27px; }
.tray-vol { width: 24px; height: 24px; margin-left: 12px; }
.tray-bat { width: 24px; height: 20px; margin-left: 11px; }
.clock { margin-left: auto; margin-right: 29px; display: flex; flex-direction: column; align-items: flex-end; line-height: 23px; font-size: 16px; margin-top: 2px; }
```
